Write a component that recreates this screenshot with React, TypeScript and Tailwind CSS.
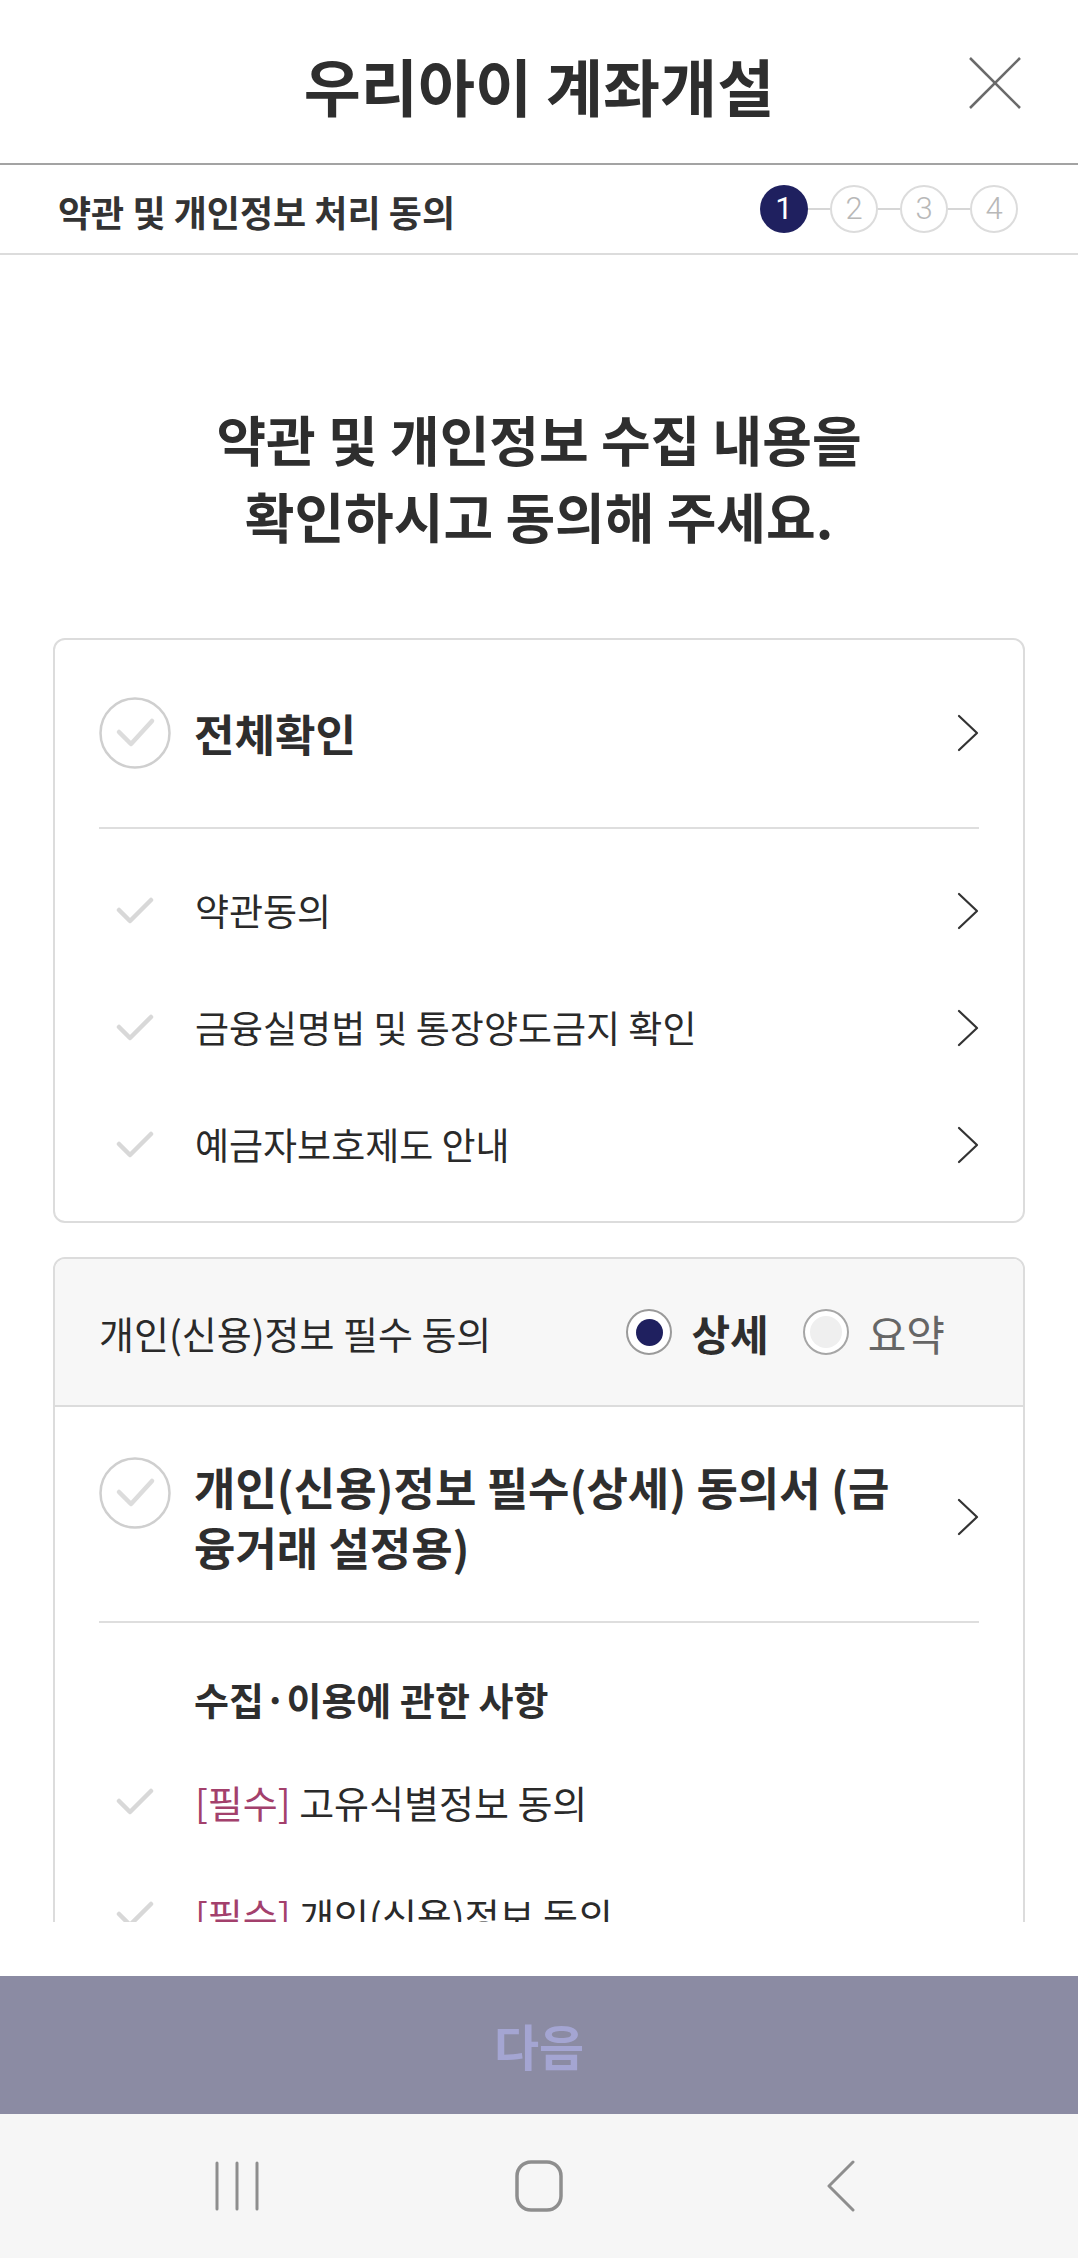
import React from "react";

const font = "font-['Noto_Sans_CJK_KR','Noto_Sans',sans-serif]";

function CircleCheck() {
  return (
    <svg width="72" height="72" viewBox="0 0 72 72" className="shrink-0">
      <circle cx="36" cy="36" r="34.5" fill="white" stroke="#cfcfcf" strokeWidth="2.5" />
      <polyline points="20,35 32,47 53,24" fill="none" stroke="#dcdcdc" strokeWidth="4.5" strokeLinecap="round" strokeLinejoin="round" />
    </svg>
  );
}

function SmallCheck() {
  return (
    <div className="w-[72px] shrink-0 flex justify-center">
      <svg width="38" height="27" viewBox="0 0 38 27">
        <polyline points="3,13 14,24 35,3" fill="none" stroke="#d8d8d8" strokeWidth="4.5" strokeLinecap="round" strokeLinejoin="round" />
      </svg>
    </div>
  );
}

function Chevron() {
  return (
    <svg width="22" height="38" viewBox="0 0 22 38" className="shrink-0">
      <polyline points="2,2 20,19 2,36" fill="none" stroke="#333" strokeWidth="2.2" strokeLinecap="round" strokeLinejoin="round" />
    </svg>
  );
}

function Steps() {
  return (
    <div className="flex items-center">
      <div className="w-[48px] h-[48px] rounded-full bg-[#1f205f] text-white flex items-center justify-center text-[31px] font-['Roboto',sans-serif]">1</div>
      {[2, 3, 4].map((n) => (
        <div key={n} className="flex items-center">
          <div className="w-[22px] h-[2px] bg-[#d6d6d6]" />
          <div className="w-[48px] h-[48px] rounded-full border-2 border-[#dcdcdc] text-[#b8b8b8] flex items-center justify-center text-[31px] font-light font-['Roboto',sans-serif]">
            {n}
          </div>
        </div>
      ))}
    </div>
  );
}

function Item({ children }: { children: React.ReactNode }) {
  return (
    <div className="flex items-center h-[117px]">
      <SmallCheck />
      <div className="flex-1 ml-[24px] text-[37px] text-[#2a2a2a]">{children}</div>
      <Chevron />
    </div>
  );
}

function Required({ label }: { label: string }) {
  return (
    <div className="flex items-center h-[113px]">
      <SmallCheck />
      <span className="ml-[24px] text-[38px] text-[#2a2a2a] whitespace-nowrap">
        <span className="text-[#a3406c]">[필수]</span> {label}
      </span>
    </div>
  );
}

export default function App() {
  return (
    <div className={`${font} w-full h-[2258px] flex flex-col bg-white overflow-hidden`}>
      {/* header */}
      <div className="relative h-[165px] shrink-0 border-b-2 border-[#a3a3a3] flex items-center justify-center pt-[6px]">
        <h1 className="text-[62px] font-bold text-[#2e2e2e] leading-none">우리아이 계좌개설</h1>
        <svg width="54" height="54" viewBox="0 0 54 54" className="absolute right-[56px] top-[56px]">
          <line x1="2" y1="2" x2="52" y2="52" stroke="#6a6a6a" strokeWidth="2.5" />
          <line x1="52" y1="2" x2="2" y2="52" stroke="#6a6a6a" strokeWidth="2.5" />
        </svg>
      </div>

      {/* sub header */}
      <div className="h-[90px] shrink-0 border-b-2 border-[#dcdcdc] flex items-center justify-between pl-[58px] pr-[60px]">
        <span className="text-[36px] font-bold text-[#333] pt-[4px]">약관 및 개인정보 처리 동의</span>
        <Steps />
      </div>

      {/* scroll content */}
      <div className="h-[1667px] shrink-0 overflow-hidden pt-[145px]">
        <h2 className="text-center text-[54px] font-bold leading-[77px] text-[#2e2e2e]">
          약관 및 개인정보 수집 내용을
          <br />
          확인하시고 동의해 주세요.
        </h2>

        {/* card 1 */}
        <div className="mt-[84px] mx-[53px] border-2 border-[#dcdcdc] rounded-[12px] px-[44px]">
          <div className="flex items-center pt-[57px] pb-[58px] border-b-2 border-[#dedede]">
            <CircleCheck />
            <span className="flex-1 ml-[23px] text-[44px] font-bold text-[#2e2e2e]">전체확인</span>
            <Chevron />
          </div>
          <div className="pt-[23px] pb-[18px]">
            <Item>약관동의</Item>
            <Item>금융실명법 및 통장양도금지 확인</Item>
            <Item>예금자보호제도 안내</Item>
          </div>
        </div>

        {/* card 2 */}
        <div className="mt-[34px] mx-[53px] border-2 border-[#dcdcdc] rounded-[12px] overflow-hidden">
          <div className="h-[148px] bg-[#f7f7f7] border-b-2 border-[#dcdcdc] flex items-center px-[44px]">
            <span className="flex-1 text-[38px] text-[#2a2a2a]">개인(신용)정보 필수 동의</span>
            <div className="flex items-center pr-[34px]">
              <div className="w-[46px] h-[46px] rounded-full border-2 border-[#9a9a9a] bg-white flex items-center justify-center">
                <div className="w-[27px] h-[27px] rounded-full bg-[#1f205f]" />
              </div>
              <span className="ml-[19px] text-[42px] font-bold text-[#2e2e2e]">상세</span>
              <div className="ml-[34px] w-[46px] h-[46px] rounded-full border-2 border-[#a6a6a6] bg-white flex items-center justify-center">
                <div className="w-[32px] h-[32px] rounded-full bg-[#efefef]" />
              </div>
              <span className="ml-[19px] text-[42px] text-[#666]">요약</span>
            </div>
          </div>
          <div className="px-[44px]">
            <div className="flex items-center pt-[50px] pb-[44px] border-b-2 border-[#dedede]">
              <div className="self-start">
                <CircleCheck />
              </div>
              <span className="flex-1 ml-[23px] text-[45px] font-bold leading-[60px] text-[#2e2e2e] whitespace-nowrap">
                개인(신용)정보 필수(상세) 동의서 (금
                <br />
                융거래 설정용)
              </span>
              <Chevron />
            </div>
            <div className="pt-[50px]">
              <div className="h-[50px] flex items-center pl-[95px] text-[38px] font-bold text-[#2e2e2e]">
                수집·이용에 관한 사항
              </div>
              <div className="pt-[22px]">
                <Required label="고유식별정보 동의" />
                <Required label="개인(신용)정보 동의" />
              </div>
            </div>
          </div>
        </div>
      </div>

      <div className="h-[54px] shrink-0 bg-white" />

      {/* next button */}
      <button className="h-[138px] shrink-0 w-full bg-[#8b8ba3] text-[#a4a5d2] text-[49px] font-bold">다음</button>

      {/* android nav */}
      <div className="h-[144px] shrink-0 bg-[#f6f6f6] flex items-center justify-center gap-[182px]">
        <div className="w-[120px] flex justify-center">
          <svg width="46" height="50" viewBox="0 0 46 50">
            <line x1="3" y1="2" x2="3" y2="48" stroke="#8e8e8e" strokeWidth="3" strokeLinecap="round" />
            <line x1="23" y1="2" x2="23" y2="48" stroke="#8e8e8e" strokeWidth="3" strokeLinecap="round" />
            <line x1="43" y1="2" x2="43" y2="48" stroke="#8e8e8e" strokeWidth="3" strokeLinecap="round" />
          </svg>
        </div>
        <div className="w-[120px] flex justify-center">
          <svg width="48" height="52" viewBox="0 0 48 52">
            <rect x="2" y="2" width="44" height="48" rx="14" fill="none" stroke="#8e8e8e" strokeWidth="3.5" />
          </svg>
        </div>
        <div className="w-[120px] flex justify-center">
          <svg width="30" height="52" viewBox="0 0 30 52">
            <polyline points="27,2 3,26 27,50" fill="none" stroke="#8e8e8e" strokeWidth="3" strokeLinecap="round" strokeLinejoin="round" />
          </svg>
        </div>
      </div>
    </div>
  );
}
